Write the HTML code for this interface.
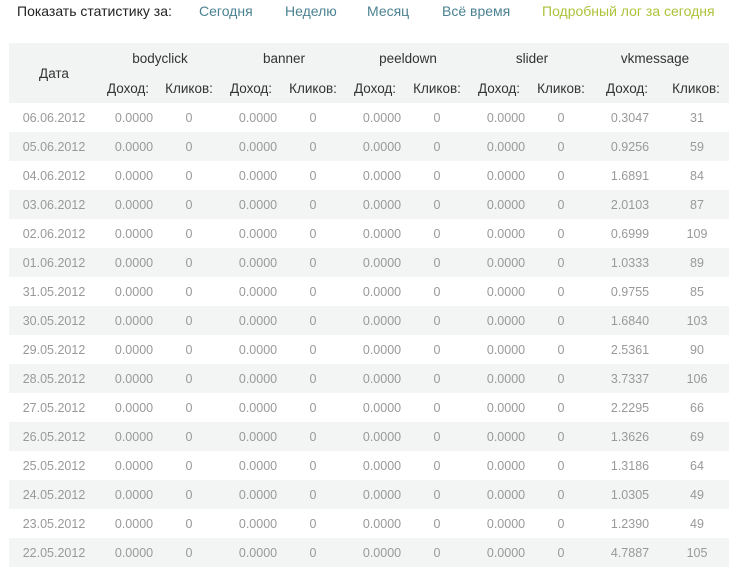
<!DOCTYPE html>
<html><head><meta charset="utf-8"><style>
body{margin:0;width:735px;height:565px;overflow:hidden;background:#fff;font-family:"Liberation Sans","DejaVu Sans",sans-serif;}
.top{position:absolute;top:3px;font-size:14px;color:#222;white-space:nowrap}
.top span{position:absolute;top:0}
.l{color:#4b8291}
.y{color:#aec23a}
.hd{position:absolute;left:9px;top:43px;width:720px;height:60px;background:#f2f3f3}
.r{position:absolute;left:9px;width:720px;height:29px}
.r.g{background:#f3f4f4}
.c{position:absolute;width:90px;text-align:center;top:8px;font-size:12.5px;color:#999}
.h{position:absolute;width:100px;text-align:center;font-size:13.5px;color:#333}
</style></head><body>
<div class="top" style="left:0;width:735px">
<span style="left:17px">Показать статистику за:</span>
<span class="l" style="left:199px">Сегодня</span>
<span class="l" style="left:285px">Неделю</span>
<span class="l" style="left:367px">Месяц</span>
<span class="l" style="left:442px">Всё время</span>
<span class="y" style="left:542px">Подробный лог за сегодня</span>
</div>
<div class="hd">
<div class="h" style="left:-5px;top:23px">Дата</div>
<div class="h" style="left:101px;top:8px">bodyclick</div>
<div class="h" style="left:225px;top:8px">banner</div>
<div class="h" style="left:349px;top:8px">peeldown</div>
<div class="h" style="left:473px;top:8px">slider</div>
<div class="h" style="left:596px;top:8px">vkmessage</div>
<div class="h" style="left:69px;top:38px">Доход:</div>
<div class="h" style="left:130px;top:38px">Кликов:</div>
<div class="h" style="left:192px;top:38px">Доход:</div>
<div class="h" style="left:254px;top:38px">Кликов:</div>
<div class="h" style="left:316px;top:38px">Доход:</div>
<div class="h" style="left:378px;top:38px">Кликов:</div>
<div class="h" style="left:440px;top:38px">Доход:</div>
<div class="h" style="left:502px;top:38px">Кликов:</div>
<div class="h" style="left:568px;top:38px">Доход:</div>
<div class="h" style="left:637px;top:38px">Кликов:</div>
</div>
<div class="r" style="top:103px"><div class="c" style="left:0">06.06.2012</div><div class="c" style="left:80px">0.0000</div><div class="c" style="left:135px">0</div><div class="c" style="left:204px">0.0000</div><div class="c" style="left:259px">0</div><div class="c" style="left:328px">0.0000</div><div class="c" style="left:383px">0</div><div class="c" style="left:452px">0.0000</div><div class="c" style="left:507px">0</div><div class="c" style="left:576px">0.3047</div><div class="c" style="left:643px">31</div></div>
<div class="r g" style="top:132px"><div class="c" style="left:0">05.06.2012</div><div class="c" style="left:80px">0.0000</div><div class="c" style="left:135px">0</div><div class="c" style="left:204px">0.0000</div><div class="c" style="left:259px">0</div><div class="c" style="left:328px">0.0000</div><div class="c" style="left:383px">0</div><div class="c" style="left:452px">0.0000</div><div class="c" style="left:507px">0</div><div class="c" style="left:576px">0.9256</div><div class="c" style="left:643px">59</div></div>
<div class="r" style="top:161px"><div class="c" style="left:0">04.06.2012</div><div class="c" style="left:80px">0.0000</div><div class="c" style="left:135px">0</div><div class="c" style="left:204px">0.0000</div><div class="c" style="left:259px">0</div><div class="c" style="left:328px">0.0000</div><div class="c" style="left:383px">0</div><div class="c" style="left:452px">0.0000</div><div class="c" style="left:507px">0</div><div class="c" style="left:576px">1.6891</div><div class="c" style="left:643px">84</div></div>
<div class="r g" style="top:190px"><div class="c" style="left:0">03.06.2012</div><div class="c" style="left:80px">0.0000</div><div class="c" style="left:135px">0</div><div class="c" style="left:204px">0.0000</div><div class="c" style="left:259px">0</div><div class="c" style="left:328px">0.0000</div><div class="c" style="left:383px">0</div><div class="c" style="left:452px">0.0000</div><div class="c" style="left:507px">0</div><div class="c" style="left:576px">2.0103</div><div class="c" style="left:643px">87</div></div>
<div class="r" style="top:219px"><div class="c" style="left:0">02.06.2012</div><div class="c" style="left:80px">0.0000</div><div class="c" style="left:135px">0</div><div class="c" style="left:204px">0.0000</div><div class="c" style="left:259px">0</div><div class="c" style="left:328px">0.0000</div><div class="c" style="left:383px">0</div><div class="c" style="left:452px">0.0000</div><div class="c" style="left:507px">0</div><div class="c" style="left:576px">0.6999</div><div class="c" style="left:643px">109</div></div>
<div class="r g" style="top:248px"><div class="c" style="left:0">01.06.2012</div><div class="c" style="left:80px">0.0000</div><div class="c" style="left:135px">0</div><div class="c" style="left:204px">0.0000</div><div class="c" style="left:259px">0</div><div class="c" style="left:328px">0.0000</div><div class="c" style="left:383px">0</div><div class="c" style="left:452px">0.0000</div><div class="c" style="left:507px">0</div><div class="c" style="left:576px">1.0333</div><div class="c" style="left:643px">89</div></div>
<div class="r" style="top:277px"><div class="c" style="left:0">31.05.2012</div><div class="c" style="left:80px">0.0000</div><div class="c" style="left:135px">0</div><div class="c" style="left:204px">0.0000</div><div class="c" style="left:259px">0</div><div class="c" style="left:328px">0.0000</div><div class="c" style="left:383px">0</div><div class="c" style="left:452px">0.0000</div><div class="c" style="left:507px">0</div><div class="c" style="left:576px">0.9755</div><div class="c" style="left:643px">85</div></div>
<div class="r g" style="top:306px"><div class="c" style="left:0">30.05.2012</div><div class="c" style="left:80px">0.0000</div><div class="c" style="left:135px">0</div><div class="c" style="left:204px">0.0000</div><div class="c" style="left:259px">0</div><div class="c" style="left:328px">0.0000</div><div class="c" style="left:383px">0</div><div class="c" style="left:452px">0.0000</div><div class="c" style="left:507px">0</div><div class="c" style="left:576px">1.6840</div><div class="c" style="left:643px">103</div></div>
<div class="r" style="top:335px"><div class="c" style="left:0">29.05.2012</div><div class="c" style="left:80px">0.0000</div><div class="c" style="left:135px">0</div><div class="c" style="left:204px">0.0000</div><div class="c" style="left:259px">0</div><div class="c" style="left:328px">0.0000</div><div class="c" style="left:383px">0</div><div class="c" style="left:452px">0.0000</div><div class="c" style="left:507px">0</div><div class="c" style="left:576px">2.5361</div><div class="c" style="left:643px">90</div></div>
<div class="r g" style="top:364px"><div class="c" style="left:0">28.05.2012</div><div class="c" style="left:80px">0.0000</div><div class="c" style="left:135px">0</div><div class="c" style="left:204px">0.0000</div><div class="c" style="left:259px">0</div><div class="c" style="left:328px">0.0000</div><div class="c" style="left:383px">0</div><div class="c" style="left:452px">0.0000</div><div class="c" style="left:507px">0</div><div class="c" style="left:576px">3.7337</div><div class="c" style="left:643px">106</div></div>
<div class="r" style="top:393px"><div class="c" style="left:0">27.05.2012</div><div class="c" style="left:80px">0.0000</div><div class="c" style="left:135px">0</div><div class="c" style="left:204px">0.0000</div><div class="c" style="left:259px">0</div><div class="c" style="left:328px">0.0000</div><div class="c" style="left:383px">0</div><div class="c" style="left:452px">0.0000</div><div class="c" style="left:507px">0</div><div class="c" style="left:576px">2.2295</div><div class="c" style="left:643px">66</div></div>
<div class="r g" style="top:422px"><div class="c" style="left:0">26.05.2012</div><div class="c" style="left:80px">0.0000</div><div class="c" style="left:135px">0</div><div class="c" style="left:204px">0.0000</div><div class="c" style="left:259px">0</div><div class="c" style="left:328px">0.0000</div><div class="c" style="left:383px">0</div><div class="c" style="left:452px">0.0000</div><div class="c" style="left:507px">0</div><div class="c" style="left:576px">1.3626</div><div class="c" style="left:643px">69</div></div>
<div class="r" style="top:451px"><div class="c" style="left:0">25.05.2012</div><div class="c" style="left:80px">0.0000</div><div class="c" style="left:135px">0</div><div class="c" style="left:204px">0.0000</div><div class="c" style="left:259px">0</div><div class="c" style="left:328px">0.0000</div><div class="c" style="left:383px">0</div><div class="c" style="left:452px">0.0000</div><div class="c" style="left:507px">0</div><div class="c" style="left:576px">1.3186</div><div class="c" style="left:643px">64</div></div>
<div class="r g" style="top:480px"><div class="c" style="left:0">24.05.2012</div><div class="c" style="left:80px">0.0000</div><div class="c" style="left:135px">0</div><div class="c" style="left:204px">0.0000</div><div class="c" style="left:259px">0</div><div class="c" style="left:328px">0.0000</div><div class="c" style="left:383px">0</div><div class="c" style="left:452px">0.0000</div><div class="c" style="left:507px">0</div><div class="c" style="left:576px">1.0305</div><div class="c" style="left:643px">49</div></div>
<div class="r" style="top:509px"><div class="c" style="left:0">23.05.2012</div><div class="c" style="left:80px">0.0000</div><div class="c" style="left:135px">0</div><div class="c" style="left:204px">0.0000</div><div class="c" style="left:259px">0</div><div class="c" style="left:328px">0.0000</div><div class="c" style="left:383px">0</div><div class="c" style="left:452px">0.0000</div><div class="c" style="left:507px">0</div><div class="c" style="left:576px">1.2390</div><div class="c" style="left:643px">49</div></div>
<div class="r g" style="top:538px"><div class="c" style="left:0">22.05.2012</div><div class="c" style="left:80px">0.0000</div><div class="c" style="left:135px">0</div><div class="c" style="left:204px">0.0000</div><div class="c" style="left:259px">0</div><div class="c" style="left:328px">0.0000</div><div class="c" style="left:383px">0</div><div class="c" style="left:452px">0.0000</div><div class="c" style="left:507px">0</div><div class="c" style="left:576px">4.7887</div><div class="c" style="left:643px">105</div></div>
</body></html>
